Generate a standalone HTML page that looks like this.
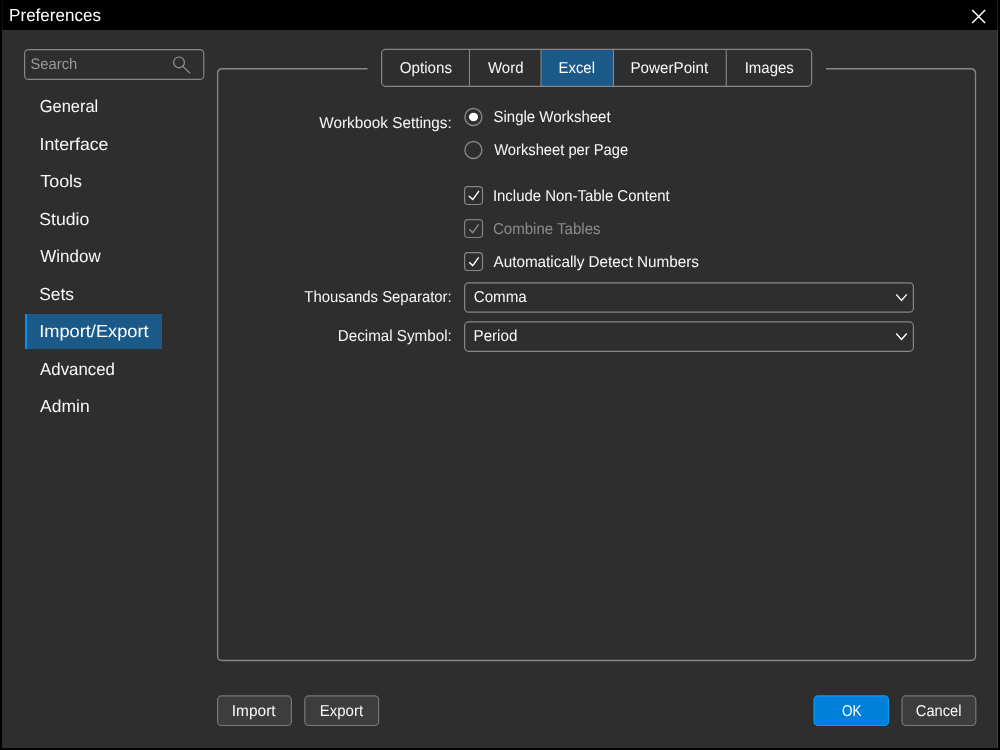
<!DOCTYPE html>
<html lang="en">
<head>
<meta charset="utf-8">
<title>Preferences</title>
<style>
html,body{margin:0;padding:0;background:#000;}
body{width:1000px;height:750px;overflow:hidden;position:relative;font-family:"Liberation Sans",sans-serif;}
svg{position:absolute;left:0;top:0;display:block;}
svg text{font-family:"Liberation Sans",sans-serif;white-space:pre;text-rendering:geometricPrecision;}
#app{position:absolute;left:0;top:0;width:1000px;height:750px;will-change:transform;}
</style>
</head>
<body>
<div id="app">
<svg width="1000" height="750" viewBox="0 0 1000 750">
<!-- window frame -->
<rect x="0" y="0" width="1000" height="750" fill="#000"/>
<rect x="2" y="0" width="1" height="30" fill="#101010"/>
<rect x="997" y="0" width="1" height="30" fill="#1c1c1c"/>
<rect x="2" y="30" width="996" height="718" fill="#2e2e2e"/>
<rect x="997" y="30" width="1" height="718" fill="#444"/>
<!-- close icon -->
<path d="M972.2 10 L985.1 23 M985.1 10 L972.2 23" stroke="#fff" stroke-width="1.5" fill="none"/>
<!-- search box -->
<rect x="24.6" y="49.6" width="179.2" height="29.8" rx="4" fill="none" stroke="#868686" stroke-width="1.2"/>
<circle cx="179" cy="62.4" r="5.4" fill="none" stroke="#989898" stroke-width="1.15"/>
<path d="M182.8 66.4 L190.2 73.4" stroke="#989898" stroke-width="1.15" fill="none"/>
<!-- sidebar selection -->
<rect x="25" y="314" width="137" height="35" fill="#1b5a88"/>
<rect x="25" y="314" width="2" height="35" fill="#0a8ff0"/>
<!-- group box -->
<path d="M217.6 73.4 V656 Q217.6 660.5 222.2 660.5 H971 Q975.5 660.5 975.5 656 V73.4" fill="none" stroke="#868686" stroke-width="1.3"/>
<path d="M367.5 68.7 H222.6 Q217.7 68.7 217.6 73.6 M975.5 73.6 Q975.4 68.7 970.5 68.7 H826" fill="none" stroke="#8a8a8a" stroke-width="1.6"/>
<!-- tabs -->
<rect x="541" y="49.45" width="72.5" height="36.9" fill="#1b5a88"/>
<rect x="381.6" y="49.45" width="430" height="36.9" rx="4" fill="none" stroke="#868686" stroke-width="1.2"/>
<path d="M469.5 50 V86 M541 50 V86 M613.5 50 V86 M726.3 50 V86" stroke="#868686" stroke-width="1.1" fill="none"/>
<!-- radios -->
<circle cx="473.4" cy="117" r="8.5" fill="none" stroke="#868686" stroke-width="1.4"/>
<ellipse cx="473.5" cy="117" rx="4.6" ry="4.2" fill="#fff"/>
<circle cx="473.4" cy="150" r="8.5" fill="none" stroke="#868686" stroke-width="1.4"/>
<!-- checkboxes -->
<rect x="464.6" y="186.6" width="17.9" height="17.9" rx="3.2" fill="none" stroke="#868686" stroke-width="1.2"/>
<rect x="464.6" y="219.6" width="17.9" height="17.9" rx="3.2" fill="none" stroke="#808080" stroke-width="1.2"/>
<rect x="464.6" y="252.6" width="17.9" height="17.9" rx="3.2" fill="none" stroke="#868686" stroke-width="1.2"/>
<path d="M469.2 196.3 L472.7 199.6 L478.7 191.3" stroke="#fff" stroke-width="1.4" stroke-linejoin="round" stroke-linecap="round" fill="none"/>
<path d="M469.2 229.3 L472.7 232.6 L478.7 224.3" stroke="#8c8c8c" stroke-width="1.4" fill="none"/>
<path d="M469.2 262.3 L472.7 265.6 L478.7 257.3" stroke="#fff" stroke-width="1.4" fill="none"/>
<!-- dropdowns -->
<rect x="464.6" y="282.8" width="448.8" height="29.4" rx="4" fill="none" stroke="#868686" stroke-width="1.2"/>
<rect x="464.6" y="321.9" width="448.8" height="29.4" rx="4" fill="none" stroke="#868686" stroke-width="1.2"/>
<path d="M896.2 294.4 L901.5 300.4 L906.8 294.4" stroke="#fff" stroke-width="1.4" fill="none"/>
<path d="M896.2 333.5 L901.5 339.5 L906.8 333.5" stroke="#fff" stroke-width="1.4" fill="none"/>
<!-- buttons -->
<rect x="217.6" y="695.9" width="73.8" height="29.6" rx="4" fill="#3d3d3d" stroke="#787878" stroke-width="1.2"/>
<rect x="304.8" y="695.9" width="73.8" height="29.6" rx="4" fill="#3d3d3d" stroke="#787878" stroke-width="1.2"/>
<rect x="814.1" y="695.9" width="74.4" height="29.6" rx="4" fill="#0080d8" stroke="#0a9df8" stroke-width="1.2"/>
<rect x="902" y="695.9" width="73.8" height="29.6" rx="4" fill="#3d3d3d" stroke="#787878" stroke-width="1.2"/>
<!-- text -->
<text id="title" x="9.11" y="21" font-size="17.4" fill="#ffffff" textLength="91.78" lengthAdjust="spacingAndGlyphs">Preferences</text>
<text id="search" x="30.48" y="68.8" font-size="15.3" fill="#999999" textLength="46.75" lengthAdjust="spacingAndGlyphs">Search</text>
<text id="s1" x="39.73" y="112" font-size="17.4" fill="#f8f8f8" textLength="58.55" lengthAdjust="spacingAndGlyphs">General</text>
<text id="s2" x="39.59" y="149.7" font-size="17.4" fill="#f8f8f8" textLength="68.83" lengthAdjust="spacingAndGlyphs">Interface</text>
<text id="s3" x="40.28" y="187" font-size="17.4" fill="#f8f8f8" textLength="41.73" lengthAdjust="spacingAndGlyphs">Tools</text>
<text id="s4" x="39.24" y="224.6" font-size="17.4" fill="#f8f8f8" textLength="50.00" lengthAdjust="spacingAndGlyphs">Studio</text>
<text id="s5" x="40.25" y="262" font-size="17.4" fill="#f8f8f8" textLength="60.43" lengthAdjust="spacingAndGlyphs">Window</text>
<text id="s6" x="39.26" y="299.6" font-size="17.4" fill="#f8f8f8" textLength="34.80" lengthAdjust="spacingAndGlyphs">Sets</text>
<text id="s7" x="39.22" y="337.1" font-size="17.4" fill="#ffffff" textLength="109.41" lengthAdjust="spacingAndGlyphs">Import/Export</text>
<text id="s8" x="40.11" y="374.5" font-size="17.4" fill="#f8f8f8" textLength="74.88" lengthAdjust="spacingAndGlyphs">Advanced</text>
<text id="s9" x="40.14" y="412" font-size="17.4" fill="#f8f8f8" textLength="49.55" lengthAdjust="spacingAndGlyphs">Admin</text>
<text id="t1" x="399.84" y="73" font-size="15.8" fill="#f8f8f8" textLength="52.14" lengthAdjust="spacingAndGlyphs">Options</text>
<text id="t2" x="488.06" y="73" font-size="15.8" fill="#f8f8f8" textLength="35.39" lengthAdjust="spacingAndGlyphs">Word</text>
<text id="t3" x="558.62" y="73" font-size="15.8" fill="#ffffff" textLength="36.33" lengthAdjust="spacingAndGlyphs">Excel</text>
<text id="t4" x="630.47" y="73" font-size="15.8" fill="#f8f8f8" textLength="77.65" lengthAdjust="spacingAndGlyphs">PowerPoint</text>
<text id="t5" x="744.68" y="73" font-size="15.8" fill="#f8f8f8" textLength="49.13" lengthAdjust="spacingAndGlyphs">Images</text>
<text id="l1" x="319.31" y="128" font-size="15.8" fill="#f6f6f6" textLength="132.49" lengthAdjust="spacingAndGlyphs">Workbook Settings:</text>
<text id="r1" x="493.52" y="122" font-size="15.8" fill="#f8f8f8" textLength="117.09" lengthAdjust="spacingAndGlyphs">Single Worksheet</text>
<text id="r2" x="494.18" y="155" font-size="15.8" fill="#f8f8f8" textLength="134.03" lengthAdjust="spacingAndGlyphs">Worksheet per Page</text>
<text id="c1" x="492.92" y="201" font-size="15.8" fill="#f8f8f8" textLength="176.75" lengthAdjust="spacingAndGlyphs">Include Non-Table Content</text>
<text id="c2" x="492.88" y="234" font-size="15.8" fill="#8c8c8c" textLength="107.72" lengthAdjust="spacingAndGlyphs">Combine Tables</text>
<text id="c3" x="493.45" y="267" font-size="15.8" fill="#f8f8f8" textLength="205.57" lengthAdjust="spacingAndGlyphs">Automatically Detect Numbers</text>
<text id="l2" x="304.35" y="302" font-size="15.8" fill="#f6f6f6" textLength="147.34" lengthAdjust="spacingAndGlyphs">Thousands Separator:</text>
<text id="l3" x="337.75" y="341" font-size="15.8" fill="#f6f6f6" textLength="114.03" lengthAdjust="spacingAndGlyphs">Decimal Symbol:</text>
<text id="d1" x="473.71" y="302" font-size="15.8" fill="#f8f8f8" textLength="53.03" lengthAdjust="spacingAndGlyphs">Comma</text>
<text id="d2" x="473.60" y="341" font-size="15.8" fill="#f8f8f8" textLength="43.71" lengthAdjust="spacingAndGlyphs">Period</text>
<text id="b1" x="231.83" y="716" font-size="15.8" fill="#f8f8f8" textLength="43.74" lengthAdjust="spacingAndGlyphs">Import</text>
<text id="b2" x="319.81" y="716" font-size="15.8" fill="#f8f8f8" textLength="43.28" lengthAdjust="spacingAndGlyphs">Export</text>
<text id="b3" x="841.94" y="716" font-size="15.8" fill="#ffffff" textLength="19.48" lengthAdjust="spacingAndGlyphs">OK</text>
<text id="b4" x="915.86" y="716" font-size="15.8" fill="#f8f8f8" textLength="45.59" lengthAdjust="spacingAndGlyphs">Cancel</text>
</svg>
</div>
</body>
</html>
